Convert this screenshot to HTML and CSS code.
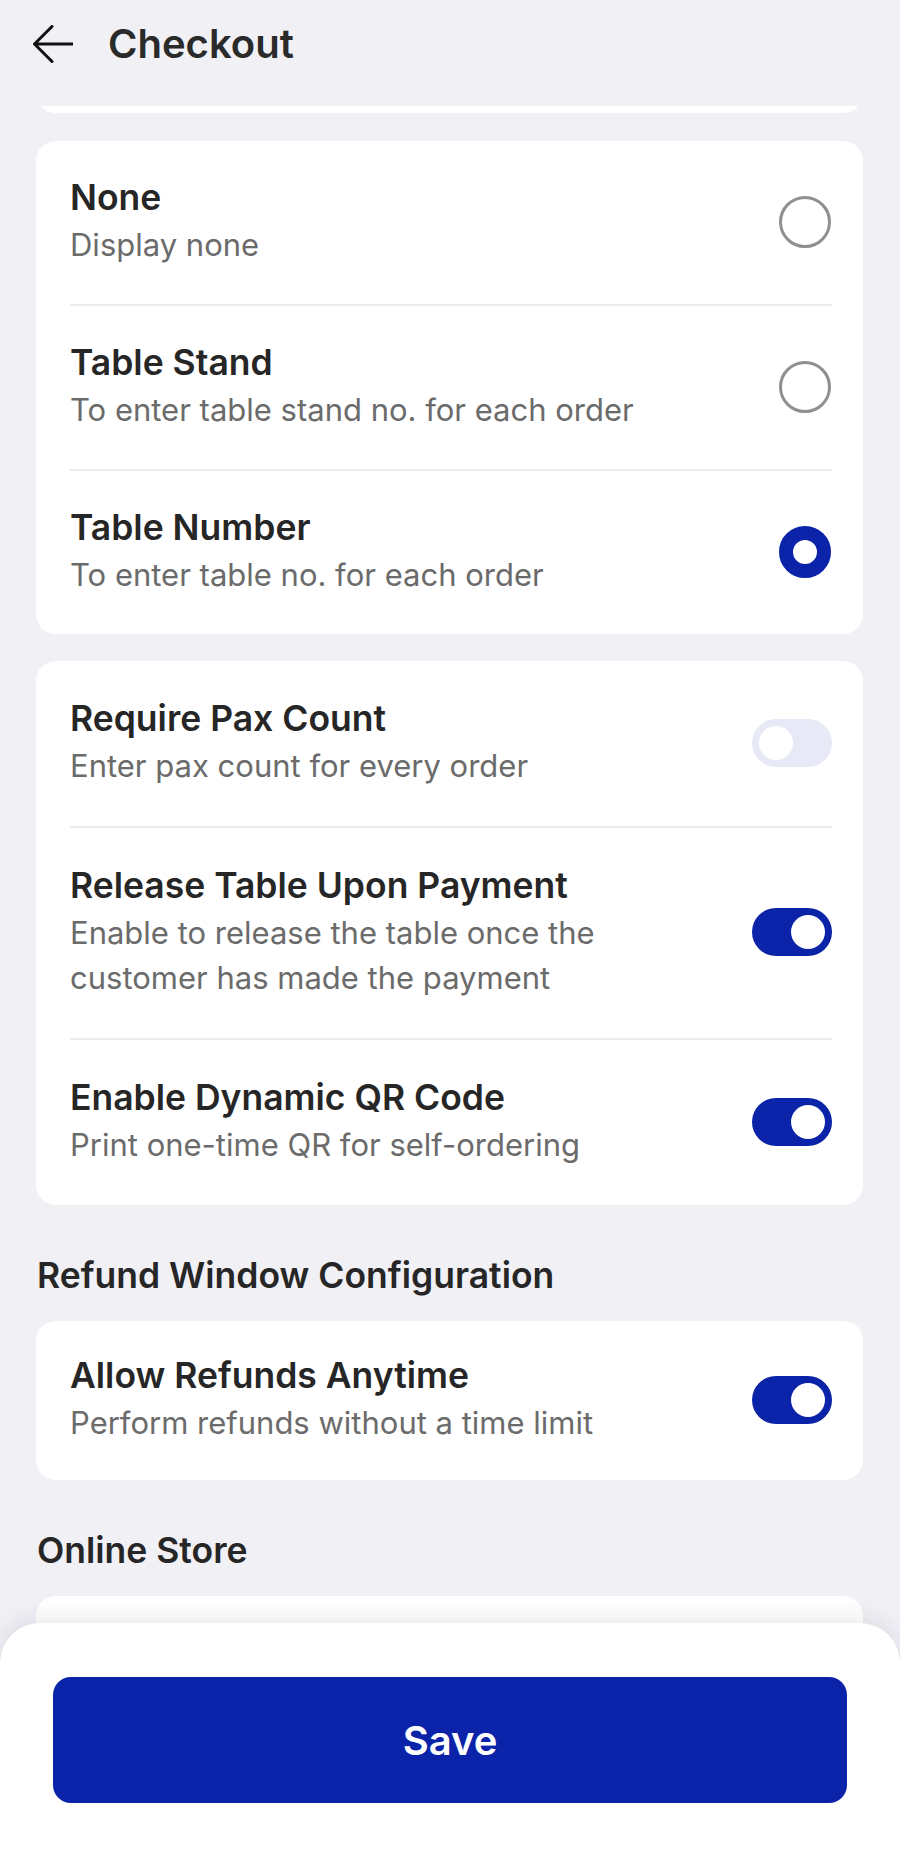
FILE: index.html
```html
<!DOCTYPE html>
<html lang="en">
<head>
<meta charset="utf-8">
<title>Checkout</title>
<link rel="stylesheet" href="styles.css">
</head>
<body>
<header class="topbar">
  <div class="topbar-row">
    <svg class="back" width="40" height="38" viewBox="0 0 40 38" aria-hidden="true">
      <path d="M40 19H2M19 1.5L1.5 19L19 36.5" fill="none" stroke="#111" stroke-width="3" stroke-linecap="round" stroke-linejoin="round"/>
    </svg>
    <h1 class="title">Checkout</h1>
  </div>
</header>

<main class="content">
  <div class="stub"><div class="stub-card"></div></div>

  <section class="card card-radio">
    <div class="row">
      <div class="row-text">
        <div class="row-title">None</div>
        <div class="row-sub">Display none</div>
      </div>
      <span class="radio"></span>
    </div>
    <hr class="divider">
    <div class="row">
      <div class="row-text">
        <div class="row-title">Table Stand</div>
        <div class="row-sub">To enter table stand no. for each order</div>
      </div>
      <span class="radio"></span>
    </div>
    <hr class="divider">
    <div class="row">
      <div class="row-text">
        <div class="row-title">Table Number</div>
        <div class="row-sub">To enter table no. for each order</div>
      </div>
      <span class="radio radio-on"></span>
    </div>
  </section>

  <section class="card">
    <div class="row">
      <div class="row-text">
        <div class="row-title">Require Pax Count</div>
        <div class="row-sub">Enter pax count for every order</div>
      </div>
      <span class="toggle"><span class="knob"></span></span>
    </div>
    <hr class="divider">
    <div class="row">
      <div class="row-text">
        <div class="row-title">Release Table Upon Payment</div>
        <div class="row-sub">Enable to release the table once the customer has made the payment</div>
      </div>
      <span class="toggle toggle-on"><span class="knob"></span></span>
    </div>
    <hr class="divider">
    <div class="row">
      <div class="row-text">
        <div class="row-title">Enable Dynamic QR Code</div>
        <div class="row-sub">Print one-time QR for self-ordering</div>
      </div>
      <span class="toggle toggle-on"><span class="knob"></span></span>
    </div>
  </section>

  <h2 class="section-title">Refund Window Configuration</h2>
  <section class="card card-tight">
    <div class="row">
      <div class="row-text">
        <div class="row-title">Allow Refunds Anytime</div>
        <div class="row-sub">Perform refunds without a time limit</div>
      </div>
      <span class="toggle toggle-on"><span class="knob"></span></span>
    </div>
  </section>

  <h2 class="section-title">Online Store</h2>
  <section class="card card-empty"></section>
</main>

<footer class="sheet">
  <button class="save" type="button">Save</button>
</footer>
</body>
</html>
```

FILE: styles.css
```css
html, body {
  margin: 0;
  padding: 0;
  height: 1857px;
  overflow: hidden;
}

body {
  background: #f0f0f5;
  font-family: Inter, "Noto Sans", "Liberation Sans", sans-serif;
  color: #262626;
}

.topbar {
  height: 106px;
  padding: 0 33px;
  box-sizing: border-box;
}

.topbar-row {
  height: 88px;
  display: flex;
  align-items: center;
  gap: 35px;
}

.back {
  display: block;
  flex: none;
}

.title {
  margin: 0;
  font-size: 40px;
  line-height: 48px;
  font-weight: 600;
  color: #2a2a2a;
}

.content {
  padding: 0 37px 0 36px;
}

.stub {
  height: 7px;
  overflow: hidden;
  display: flex;
  align-items: flex-end;
}

.stub-card {
  flex: 1;
  height: 40px;
  flex-shrink: 0;
  background: #fff;
  border-radius: 20px;
}

.card {
  background: #fff;
  border-radius: 20px;
  margin-top: 28px;
}

.card + .card {
  margin-top: 27px;
}

.row {
  display: flex;
  align-items: center;
  justify-content: space-between;
  padding: 36px 31px 38px 34px;
}

.card-radio .row {
  padding-top: 35px;
  padding-bottom: 37px;
}

.card-tight .row {
  padding-top: 33px;
  padding-bottom: 35px;
}

.row-text {
  max-width: 610px;
}

.row-title {
  font-size: 35.5px;
  line-height: 44px;
  font-weight: 600;
  color: #262626;
}

.row-sub {
  margin-top: 2px;
  font-size: 31px;
  line-height: 45px;
  font-weight: 400;
  color: #6b6b6b;
}

.divider {
  border: 0;
  border-top: 2px solid #ececf0;
  margin: 0 31px 0 34px;
  height: 0;
}

.radio {
  flex: none;
  width: 52px;
  height: 52px;
  box-sizing: border-box;
  border-radius: 50%;
  border: 3px solid #8f8f8f;
  margin-right: 1px;
}

.radio-on {
  border: 14px solid #0a23a8;
}

.toggle {
  flex: none;
  width: 80px;
  height: 48px;
  box-sizing: border-box;
  padding: 7px;
  border-radius: 24px;
  background: #e8e9f6;
  display: flex;
  justify-content: flex-start;
}

.toggle-on {
  background: #0a23a8;
  justify-content: flex-end;
}

.knob {
  width: 34px;
  height: 34px;
  border-radius: 50%;
  background: #fff;
}

.section-title {
  margin: 49px 0 0 1px;
  font-size: 35.5px;
  line-height: 44px;
  font-weight: 600;
  color: #262626;
}

.section-title + .card {
  margin-top: 23px;
}

.card-empty {
  height: 240px;
}

.sheet {
  position: fixed;
  left: 0;
  right: 0;
  bottom: 0;
  height: 234px;
  box-sizing: border-box;
  padding: 54px 53px 0;
  background: #fff;
  border-radius: 40px 40px 0 0;
  box-shadow: 0 -4px 24px rgba(30, 30, 60, 0.10);
}

.save {
  display: block;
  width: 100%;
  height: 126px;
  border: 0;
  border-radius: 18px;
  background: #0a23a8;
  color: #fff;
  font-family: Inter, "Noto Sans", "Liberation Sans", sans-serif;
  font-size: 40px;
  font-weight: 600;
}
```
